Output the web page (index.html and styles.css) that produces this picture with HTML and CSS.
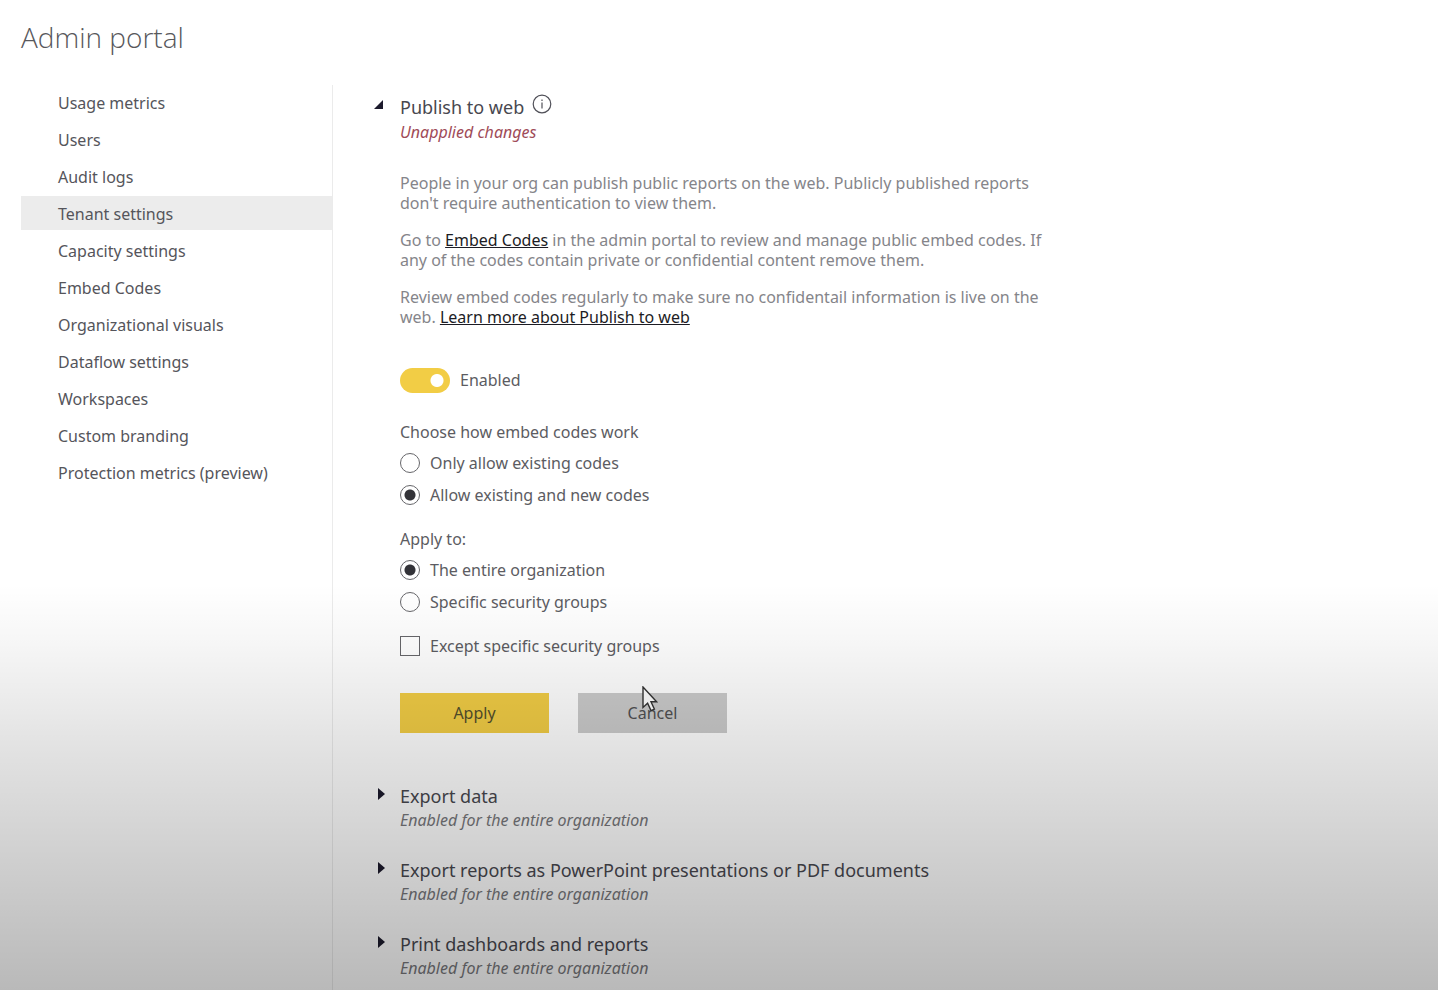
FILE: index.html
```html
<!DOCTYPE html>
<html lang="en">
<head>
<meta charset="utf-8">
<meta name="viewport" content="width=device-width, initial-scale=1">
<title>Admin portal</title>
<link rel="stylesheet" href="styles.css">
</head>
<body>
<div class="page">
  <header class="page-header"><h1 class="page-title">Admin portal</h1></header>
  <div class="layout">
    <nav class="side-nav" aria-label="Admin portal">
      <a class="nav-item" href="#">Usage metrics</a>
      <a class="nav-item" href="#">Users</a>
      <a class="nav-item" href="#">Audit logs</a>
      <a class="nav-item active" href="#" aria-current="page">Tenant settings</a>
      <a class="nav-item" href="#">Capacity settings</a>
      <a class="nav-item" href="#">Embed Codes</a>
      <a class="nav-item" href="#">Organizational visuals</a>
      <a class="nav-item" href="#">Dataflow settings</a>
      <a class="nav-item" href="#">Workspaces</a>
      <a class="nav-item" href="#">Custom branding</a>
      <a class="nav-item" href="#">Protection metrics (preview)</a>
    </nav>
    <main class="settings">
      <details class="setting" open>
        <summary class="setting-head">
          <svg class="caret" viewBox="0 0 12 12" aria-hidden="true"><path d="M9 2v9H0z"/></svg>
          <span class="setting-name">Publish to web
            <svg class="info" viewBox="0 0 20 20" aria-hidden="true"><circle cx="10" cy="10" r="8.8"/><path d="M10 8.500v6M10 5.500v1.500"/></svg>
          </span>
          <span class="setting-state warning">Unapplied changes</span>
        </summary>
        <div class="setting-body">
          <div class="description">
            <p>People in your org can publish public reports on the web. Publicly published reports don't require authentication to view them.</p>
            <p>Go to <a href="#">Embed Codes</a> in the admin portal to review and manage public embed codes. If any of the codes contain private or confidential content remove them.</p>
            <p>Review embed codes regularly to make sure no confidentail information is live on the web. <a href="#">Learn more about Publish to web</a></p>
          </div>
          <label class="option toggle-row"><input class="toggle" type="checkbox" role="switch" checked>Enabled</label>
          <fieldset class="group">
            <legend>Choose how embed codes work</legend>
            <label class="option"><input class="radio" type="radio" name="codes">Only allow existing codes</label>
            <label class="option"><input class="radio" type="radio" name="codes" checked>Allow existing and new codes</label>
          </fieldset>
          <fieldset class="group">
            <legend>Apply to:</legend>
            <label class="option"><input class="radio" type="radio" name="scope" checked>The entire organization</label>
            <label class="option"><input class="radio" type="radio" name="scope">Specific security groups</label>
          </fieldset>
          <label class="option except"><input class="check" type="checkbox">Except specific security groups</label>
          <div class="actions">
            <button class="button primary" type="button">Apply</button>
            <button class="button" type="button">Cancel
              <svg class="pointer" viewBox="0 0 16 26" aria-hidden="true"><path d="M1 1v20.500l4.600-4.300 3.400 7.400 3.400-1.500-3.400-7.300h5.600z"/></svg>
            </button>
          </div>
        </div>
      </details>
      <details class="setting">
        <summary class="setting-head">
          <svg class="caret" viewBox="0 0 12 12" aria-hidden="true"><path d="M4 0l7 6-7 6z"/></svg>
          <span class="setting-name">Export data</span>
          <span class="setting-state">Enabled for the entire organization</span>
        </summary>
      </details>
      <details class="setting">
        <summary class="setting-head">
          <svg class="caret" viewBox="0 0 12 12" aria-hidden="true"><path d="M4 0l7 6-7 6z"/></svg>
          <span class="setting-name">Export reports as PowerPoint presentations or PDF documents</span>
          <span class="setting-state">Enabled for the entire organization</span>
        </summary>
      </details>
      <details class="setting">
        <summary class="setting-head">
          <svg class="caret" viewBox="0 0 12 12" aria-hidden="true"><path d="M4 0l7 6-7 6z"/></svg>
          <span class="setting-name">Print dashboards and reports</span>
          <span class="setting-state">Enabled for the entire organization</span>
        </summary>
      </details>
    </main>
  </div>
  <div class="shade"></div>
</div>
</body>
</html>
```
FILE: styles.css
```css
* { box-sizing: border-box; }
body {
  margin: 0;
  background: #fff;
  color: #5c5c62;
  font: 16px/24px "Noto Sans", "Open Sans", sans-serif;
}
.page {
  position: relative;
  display: flex;
  flex-direction: column;
  min-height: 100vh;
}
.page-header { padding: 17px 21px 28px; }
.page-title {
  margin: 0;
  font-family: "Open Sans", "Noto Sans", sans-serif;
  font-size: 28px;
  font-weight: 300;
  line-height: 40px;
  color: #58585c;
}
.layout { display: flex; flex: 1; padding-left: 21px; }
.side-nav {
  display: flex;
  flex-direction: column;
  gap: 3px;
  flex: 0 0 312px;
  border-right: 1px solid #ebebeb;
}
.nav-item {
  padding: 6px 0 4px 37px;
  color: #55555b;
  text-decoration: none;
}
.nav-item.active { background: #ececec; }
.settings {
  flex: 1;
  display: flex;
  flex-direction: column;
  gap: 26px;
  padding: 9px 41px 0;
}
.setting-head {
  display: grid;
  grid-template-columns: 26px 1fr;
  list-style: none;
  cursor: pointer;
}
.caret { width: 12px; height: 12px; margin-top: 4px; fill: #1c1a2c; }
.setting-name {
  display: flex;
  align-items: center;
  gap: 8px;
  font-size: 18px;
  color: #48484f;
}
.setting-state { grid-column: 2; font-style: italic; color: #77777b; }
.warning { color: #a04b58; }
.info {
  width: 20px;
  height: 20px;
  margin-bottom: 6px;
  fill: none;
  stroke: #505058;
  stroke-width: 1.2;
}
.setting-body { padding: 29px 0 25px 26px; }
.description {
  max-width: 670px;
  line-height: 20px;
  color: #85858a;
}
.description p { margin: 0 0 17px; }
.description a { color: #1c1c24; }
.option { display: flex; align-items: center; gap: 10px; min-height: 32px; }
.toggle-row { margin-top: 37px; }
.toggle, .radio, .check {
  appearance: none;
  flex: none;
  width: 20px;
  height: 20px;
  margin: 0;
  border: 1px solid #66666a;
  background: #fff;
}
.toggle {
  width: 50px;
  height: 25px;
  border: 0;
  border-radius: 13px;
  background: radial-gradient(circle at 37px 50%, #fff 6px, transparent 7px) #f2cd45;
}
.radio { border-radius: 50%; }
.radio:checked { background: radial-gradient(circle, #333338 5px, #fff 6px); }
.check { background: transparent; }
.group { margin: 24px 0 0; padding: 0; border: 0; }
.group + .group { margin-top: 16px; }
.group legend { padding: 0 0 3px; }
.except { margin-top: 12px; }
.actions { display: flex; gap: 29px; margin-top: 31px; }
.button {
  position: relative;
  width: 149px;
  height: 40px;
  padding: 0;
  border: 0;
  background: #cbcbcb;
  color: #505052;
  font: inherit;
}
.button.primary { background: #f2cd45; color: #544f2c; }
.pointer {
  position: absolute;
  left: 64px;
  top: -7px;
  width: 16px;
  height: 26px;
  fill: #fff;
  stroke: #333;
  stroke-width: 1.4;
}
.shade {
  position: absolute;
  inset: 0;
  pointer-events: none;
  background: linear-gradient(rgba(0, 0, 0, 0) 59%, rgba(0, 0, 0, .035) 65%, rgba(0, 0, 0, .11) 75%, rgba(0, 0, 0, .275) 100%);
}
```
